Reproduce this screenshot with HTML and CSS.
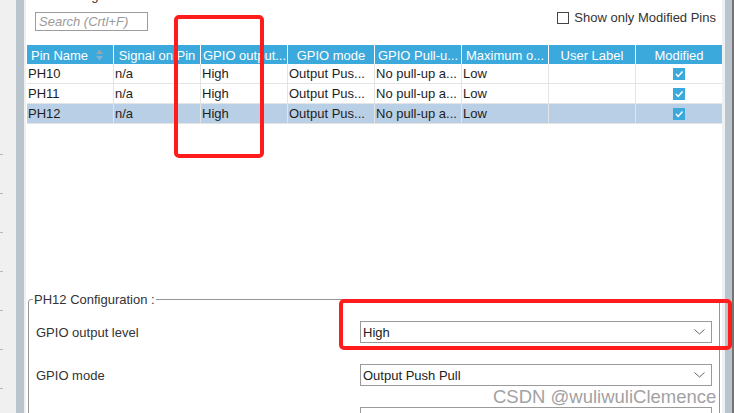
FILE: index.html
```html
<!DOCTYPE html>
<html lang="en">
<head>
  <meta charset="UTF-8">
  <meta name="viewport" content="width=device-width, initial-scale=1.0">
  <title>Pin Configuration</title>
  <link rel="stylesheet" href="styles.css">
</head>
<body>
  <div class="app">
    <div class="gutter"><div class="gutter-ticks"></div></div>
    <div class="rail"><div class="rail-bar"></div></div>

    <div class="pane">
      <div class="search-caption">Search Signals</div>
      <div class="toolbar">
        <div class="search-box">Search (Crtl+F)</div>
        <label class="only-modified"><span class="box"></span>Show only Modified Pins</label>
      </div>

      <div class="pin-table">
        <div class="thead">
          <div class="th th-sort">Pin Name
            <svg width="7" height="12" viewBox="0 0 7 12">
              <polygon points="0,5 3.5,0.5 7,5" fill="#9aa6ae"/>
              <polygon points="0,7 3.5,11.5 7,7" fill="#82b4d2"/>
            </svg>
          </div>
          <div class="th">Signal on Pin</div>
          <div class="th">GPIO output...</div>
          <div class="th">GPIO mode</div>
          <div class="th">GPIO Pull-u...</div>
          <div class="th">Maximum o...</div>
          <div class="th">User Label</div>
          <div class="th">Modified</div>
        </div>
        <div class="tbody">
          <div class="tr">
            <div class="td">PH10</div>
            <div class="td">n/a</div>
            <div class="td">High</div>
            <div class="td">Output Pus...</div>
            <div class="td">No pull-up a...</div>
            <div class="td">Low</div>
            <div class="td"></div>
            <div class="td td-check"><svg width="12" height="12" viewBox="0 0 12 12"><rect width="12" height="12" fill="#3ba9dc"/><polyline points="3,6 5.2,8.4 9.5,3.6" fill="none" stroke="#fff" stroke-width="1.5"/></svg></div>
          </div>
          <div class="tr">
            <div class="td">PH11</div>
            <div class="td">n/a</div>
            <div class="td">High</div>
            <div class="td">Output Pus...</div>
            <div class="td">No pull-up a...</div>
            <div class="td">Low</div>
            <div class="td"></div>
            <div class="td td-check"><svg width="12" height="12" viewBox="0 0 12 12"><rect width="12" height="12" fill="#3ba9dc"/><polyline points="3,6 5.2,8.4 9.5,3.6" fill="none" stroke="#fff" stroke-width="1.5"/></svg></div>
          </div>
          <div class="tr selected">
            <div class="td">PH12</div>
            <div class="td">n/a</div>
            <div class="td">High</div>
            <div class="td">Output Pus...</div>
            <div class="td">No pull-up a...</div>
            <div class="td">Low</div>
            <div class="td"></div>
            <div class="td td-check"><svg width="12" height="12" viewBox="0 0 12 12"><rect width="12" height="12" fill="#3ba9dc"/><polyline points="3,6 5.2,8.4 9.5,3.6" fill="none" stroke="#fff" stroke-width="1.5"/></svg></div>
          </div>
        </div>
      </div>

      <fieldset class="config">
        <legend>PH12 Configuration :</legend>
        <div class="field">
          <span class="field-label">GPIO output level</span>
          <div class="select">High
            <svg width="11" height="6" viewBox="0 0 11 6"><polyline points="0.5,0.5 5.5,5 10.5,0.5" fill="none" stroke="#666" stroke-width="1"/></svg>
          </div>
        </div>
        <div class="field">
          <span class="field-label">GPIO mode</span>
          <div class="select">Output Push Pull
            <svg width="11" height="6" viewBox="0 0 11 6"><polyline points="0.5,0.5 5.5,5 10.5,0.5" fill="none" stroke="#666" stroke-width="1"/></svg>
          </div>
        </div>
        <div class="field">
          <span class="field-label"></span>
          <div class="select"></div>
        </div>
      </fieldset>
    </div>

    <div class="vscroll"><div class="vscroll-bar"></div></div>
  </div>

  <!-- red annotation boxes -->
  <div class="mark mark-column"></div>
  <div class="mark mark-level"></div>

  <div class="watermark">CSDN @wuliwuliClemence</div>
</body>
</html>
```

FILE: styles.css
```css
* {
  box-sizing: border-box;
}

body {
  margin: 0;
  width: 734px;
  height: 413px;
  overflow: hidden;
  position: relative;
  font-family: "Liberation Sans", Arial, sans-serif;
  font-size: 13px;
  color: #222;
  background-color: #fff;
}

.app {
  display: flex;
  height: 413px;
}

.gutter {
  width: 13px;
  background-color: #f0f0f0;
}

.gutter-ticks {
  margin-top: 154px;
  height: 259px;
  background-image: linear-gradient(to bottom, #b8b8b8 0, #b8b8b8 1px, transparent 1px);
  background-size: 3px 39px;
  background-repeat: repeat-y;
}

.rail {
  width: 13px;
  padding: 0 2px 0 3px;
  background-color: #eef0f2;
}

.rail-bar {
  height: 100%;
  background-color: #b9c4cc;
}

.pane {
  width: 696px;
  height: 413px;
  overflow: hidden;
  display: flex;
  flex-direction: column;
  background-color: #fff;
}

.search-caption {
  height: 12px;
  margin: -12px 0 0 9px;
  line-height: 15px;
  color: #333;
}

.toolbar {
  display: flex;
  justify-content: space-between;
  align-items: flex-start;
  height: 19px;
  margin-top: 12px;
  padding: 0 6px 0 9px;
}

.search-box {
  width: 113px;
  height: 19px;
  border: 1px solid #9c9c9c;
  padding-left: 3px;
  line-height: 17px;
  font-style: italic;
  color: #9a9a9a;
}

.only-modified {
  display: flex;
  align-items: center;
  gap: 5px;
  margin-top: -2px;
  line-height: 15px;
  color: #333;
}

.only-modified .box {
  width: 12px;
  height: 12px;
  border: 1px solid #444;
  background-color: #fff;
}

.pin-table {
  width: 695px;
  margin: 14px 0 0 1px;
}

.thead,
.tr {
  display: grid;
  grid-template-columns: repeat(8, 1fr);
  column-gap: 1px;
}

.thead {
  background-color: #fff;
}

.th {
  height: 19px;
  line-height: 22px;
  padding: 0 2px;
  overflow: hidden;
  white-space: nowrap;
  text-align: center;
  color: #fff;
  background-color: #3ba9dc;
}

.th-sort {
  display: flex;
  align-items: center;
  padding-left: 4px;
  line-height: 19px;
  padding-top: 2px;
  text-align: left;
}

.th-sort svg {
  margin: -2px 0 0 8px;
}

.tbody {
  display: flex;
  flex-direction: column;
  gap: 1px;
  padding-bottom: 1px;
  background-color: #e4e4e4;
}

.tr {
  background-color: #e4e4e4;
}

.td {
  height: 19px;
  line-height: 19px;
  padding-left: 1px;
  overflow: hidden;
  white-space: nowrap;
  background-color: #fff;
  color: #1e1e1e;
}

.tr.selected .td {
  background-color: #b9cfe5;
}

.td-check {
  display: flex;
  justify-content: center;
  align-items: center;
  padding: 1px 0 0;
}

.config {
  flex-shrink: 0;
  margin: 168px 2px 0 2px;
  padding: 14px 7px 0 7px;
  height: 300px;
  border: 1px solid #959595;
  border-radius: 3px 0 0 0;
}

.config legend {
  margin-left: -3px;
  padding: 0 1px;
  line-height: 15px;
  color: #333;
}

.field {
  display: flex;
  align-items: center;
  margin-bottom: 21px;
}

.field-label {
  width: 324px;
  color: #333;
}

.select {
  flex: 1;
  height: 22px;
  display: flex;
  justify-content: space-between;
  align-items: center;
  padding: 0 6px 0 2px;
  border: 1px solid #9a9a9a;
  color: #222;
}

.vscroll {
  width: 12px;
  padding-left: 3px;
  background-color: #eef0f2;
  border-right: 2px solid #747474;
}

.vscroll-bar {
  height: 100%;
  background-color: #b9c4cc;
}

.mark {
  position: absolute;
  border: 4px solid #fe1c1c;
  border-radius: 5px;
}

.mark-column {
  left: 174px;
  top: 15px;
  width: 90px;
  height: 143px;
}

.mark-level {
  left: 339px;
  top: 299px;
  width: 393px;
  height: 51px;
}

.watermark {
  position: absolute;
  left: 493px;
  top: 386px;
  font-size: 18.5px;
  color: #a2a2a2;
  white-space: nowrap;
}
```
